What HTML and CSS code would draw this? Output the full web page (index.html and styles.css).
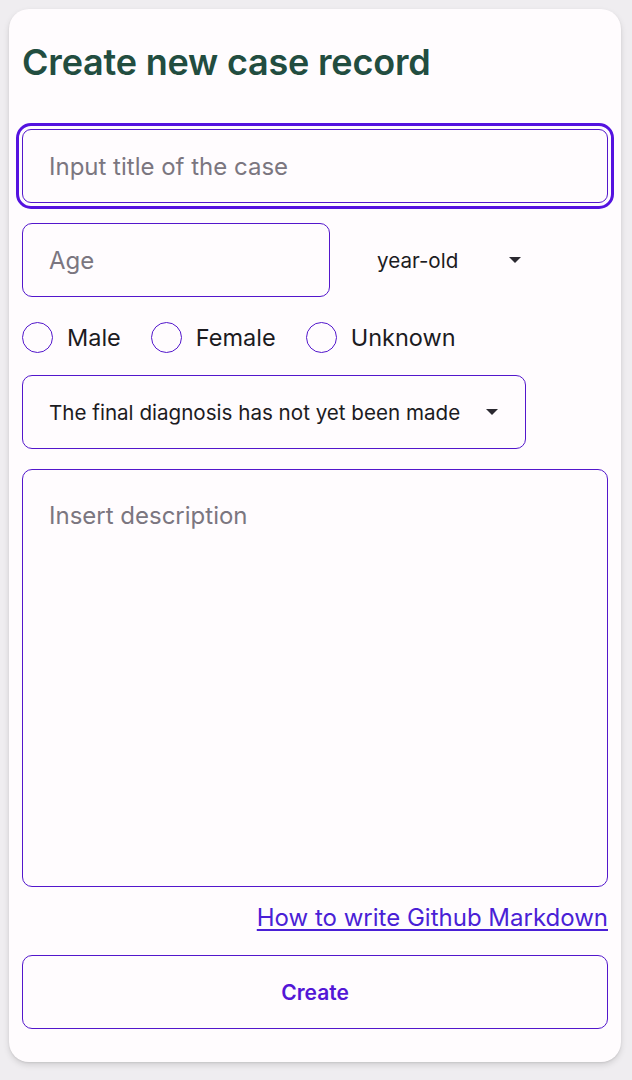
FILE: index.html
```html
<!DOCTYPE html>
<html lang="en">
<head>
<meta charset="utf-8">
<title>Create new case record</title>
<link rel="stylesheet" href="styles.css">
</head>
<body>
<div class="card">
  <h1 class="title">Create new case record</h1>
  <div class="field field-focus field-full">
    <span class="placeholder">Input title of the case</span>
  </div>
  <div class="age-row">
    <div class="field field-age">
      <span class="placeholder">Age</span>
    </div>
    <div class="unit-select">
      <span class="select-text">year-old</span>
      <svg class="caret" width="12" height="6" viewBox="0 0 12 6"><path d="M0 0 L12 0 L6 6 Z" fill="#2b2930"/></svg>
    </div>
  </div>
  <div class="radio-row">
    <label class="radio"><span class="radio-circle"></span><span class="radio-label">Male</span></label>
    <label class="radio"><span class="radio-circle"></span><span class="radio-label">Female</span></label>
    <label class="radio"><span class="radio-circle"></span><span class="radio-label">Unknown</span></label>
  </div>
  <div class="field field-diag">
    <span class="select-text">The final diagnosis has not yet been made</span>
    <svg class="caret" width="12" height="6" viewBox="0 0 12 6"><path d="M0 0 L12 0 L6 6 Z" fill="#2b2930"/></svg>
  </div>
  <div class="field field-area">
    <span class="placeholder">Insert description</span>
  </div>
  <div class="link-row">
    <a class="md-link" href="#">How to write Github Markdown</a>
  </div>
  <div class="btn">Create</div>
</div>
</body>
</html>
```
FILE: styles.css
```css
html, body {
  margin: 0;
  padding: 0;
}
body {
  background: #efedf0;
  padding: 9px 11px 18px 9px;
  font-family: "Inter", "Noto Sans", sans-serif;
  color: #1c1b1f;
}
.card {
  background: #fffcfe;
  border-radius: 20px;
  padding: 20px 13px 33px 13px;
  box-shadow: 0 3px 6px rgba(0, 0, 0, 0.12), 0 1px 2px rgba(0, 0, 0, 0.08);
}
.title {
  margin: 0;
  font-size: 36px;
  line-height: 66px;
  font-weight: 600;
  color: #224d40;
  letter-spacing: -0.2px;
}
.field {
  box-sizing: border-box;
  border: 1.5px solid #5317cc;
  border-radius: 10px;
  height: 74px;
  display: flex;
  align-items: center;
  padding: 0 26px;
  background: #fffcfe;
}
.field-full {
  margin-top: 34px;
}
.field-focus {
  outline: 3px solid #5412e0;
  outline-offset: 3px;
  border-radius: 9px;
}
.placeholder {
  font-size: 24px;
  color: #7b7680;
}
.age-row {
  display: flex;
  align-items: center;
  margin-top: 20px;
}
.field-age {
  width: 308px;
}
.unit-select {
  display: flex;
  align-items: center;
  margin-left: 47px;
}
.select-text {
  font-size: 20.6px;
  color: #1c1b1f;
}
.unit-select .caret {
  margin-left: 51px;
}
.radio-row {
  display: flex;
  align-items: center;
  margin-top: 25px;
  height: 30px;
  gap: 30px;
}
.radio {
  display: flex;
  align-items: center;
  gap: 14px;
}
.radio-circle {
  box-sizing: border-box;
  width: 31px;
  height: 31px;
  border: 1.7px solid #5317cc;
  border-radius: 50%;
}
.radio-label {
  font-size: 23.5px;
  color: #1c1b1f;
}
.field-diag {
  margin-top: 23px;
  width: 504px;
  justify-content: space-between;
  padding-right: 27px;
}
.field-area {
  margin-top: 20px;
  height: 418px;
  align-items: flex-start;
  padding-top: 31px;
}
.link-row {
  display: flex;
  justify-content: flex-end;
  margin-top: 16px;
  line-height: 30px;
}
.md-link {
  font-size: 24px;
  color: #4a1fd6;
  text-decoration: underline;
  text-underline-offset: 3px;
}
.btn {
  box-sizing: border-box;
  margin-top: 22px;
  height: 74px;
  border: 1.5px solid #5317cc;
  border-radius: 10px;
  display: flex;
  align-items: center;
  justify-content: center;
  font-size: 21px;
  font-weight: 600;
  color: #5316d6;
}
```
